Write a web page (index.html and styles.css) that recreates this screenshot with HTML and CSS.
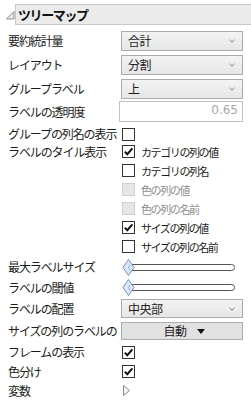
FILE: index.html
```html
<!DOCTYPE html>
<html lang="ja">
<head>
<meta charset="utf-8">
<link rel="stylesheet" href="styles.css">
</head>
<body>
<div class="panel">
  <div class="hdr">
    <svg class="hdr-tri" width="10" height="10" viewBox="0 0 10 10"><polygon points="9,1.5 9,9 1.5,9" fill="#e8e8e8" stroke="#8c8c8c" stroke-width="1"/></svg>
    <div class="title-box">ツリーマップ</div>
  </div>
  <div class="form">
    <div class="row h24">
      <span class="lbl">要約統計量</span>
      <div class="combo"><span class="combo-text">合計</span><svg class="chev" width="6" height="4" viewBox="0 0 6 4"><polyline points="0.5,0.8 3,3.2 5.5,0.8" fill="none" stroke="#777" stroke-width="1"/></svg></div>
    </div>
    <div class="row h24">
      <span class="lbl">レイアウト</span>
      <div class="combo"><span class="combo-text">分割</span><svg class="chev" width="6" height="4" viewBox="0 0 6 4"><polyline points="0.5,0.8 3,3.2 5.5,0.8" fill="none" stroke="#777" stroke-width="1"/></svg></div>
    </div>
    <div class="row h24">
      <span class="lbl">グループラベル</span>
      <div class="combo"><span class="combo-text">上</span><svg class="chev" width="6" height="4" viewBox="0 0 6 4"><polyline points="0.5,0.8 3,3.2 5.5,0.8" fill="none" stroke="#777" stroke-width="1"/></svg></div>
    </div>
    <div class="row h21">
      <span class="lbl">ラベルの透明度</span>
      <div class="field">0.65</div>
    </div>
    <div class="row h20 pt4">
      <span class="lbl">グループの列名の表示</span>
      <span class="cb"></span>
    </div>
    <div class="row top">
      <span class="lbl lh19">ラベルのタイル表示</span>
      <div class="cb-list">
        <div class="cb-item"><span class="cb"><svg width="11" height="11" viewBox="0 0 11 11"><path d="M1.8 5.6 L4.3 8.2 L9.4 2.4" fill="none" stroke="#111" stroke-width="2"/></svg></span><span class="cb-lbl">カテゴリの列の値</span></div>
        <div class="cb-item"><span class="cb"></span><span class="cb-lbl">カテゴリの列名</span></div>
        <div class="cb-item"><span class="cb dis"></span><span class="cb-lbl dis-t">色の列の値</span></div>
        <div class="cb-item"><span class="cb dis"></span><span class="cb-lbl dis-t">色の列の名前</span></div>
        <div class="cb-item"><span class="cb"><svg width="11" height="11" viewBox="0 0 11 11"><path d="M1.8 5.6 L4.3 8.2 L9.4 2.4" fill="none" stroke="#111" stroke-width="2"/></svg></span><span class="cb-lbl">サイズの列の値</span></div>
        <div class="cb-item"><span class="cb"></span><span class="cb-lbl">サイズの列の名前</span></div>
      </div>
    </div>
    <div class="row h22">
      <span class="lbl">最大ラベルサイズ</span>
      <div class="slider"><span class="track"></span><svg class="thumb" width="13" height="17" viewBox="0 0 13 17"><polygon points="6.5,0.5 12,8.5 6.5,16.5 1,8.5" fill="#dde9f7" stroke="#6f90c2" stroke-width="1"/><path d="M8 5.8 Q5 8.5 8 11.2" fill="none" stroke="#8eaad3" stroke-width="1"/></svg></div>
    </div>
    <div class="row h19">
      <span class="lbl">ラベルの閾値</span>
      <div class="slider"><span class="track"></span><svg class="thumb" width="13" height="17" viewBox="0 0 13 17"><polygon points="6.5,0.5 12,8.5 6.5,16.5 1,8.5" fill="#dde9f7" stroke="#6f90c2" stroke-width="1"/><path d="M8 5.8 Q5 8.5 8 11.2" fill="none" stroke="#8eaad3" stroke-width="1"/></svg></div>
    </div>
    <div class="row h23">
      <span class="lbl">ラベルの配置</span>
      <div class="combo short"><span class="combo-text">中央部</span><svg class="chev" width="6" height="4" viewBox="0 0 6 4"><polyline points="0.5,0.8 3,3.2 5.5,0.8" fill="none" stroke="#777" stroke-width="1"/></svg></div>
    </div>
    <div class="row h22">
      <span class="lbl">サイズの列のラベルの</span>
      <div class="btn"><span>自動</span><svg class="btn-arrow" width="8" height="5" viewBox="0 0 8 5"><polygon points="0,0 8,0 4,5" fill="#111"/></svg></div>
    </div>
    <div class="row h20">
      <span class="lbl">フレームの表示</span>
      <span class="cb"><svg width="11" height="11" viewBox="0 0 11 11"><path d="M1.8 5.6 L4.3 8.2 L9.4 2.4" fill="none" stroke="#111" stroke-width="2"/></svg></span>
    </div>
    <div class="row h19">
      <span class="lbl">色分け</span>
      <span class="cb"><svg width="11" height="11" viewBox="0 0 11 11"><path d="M1.8 5.6 L4.3 8.2 L9.4 2.4" fill="none" stroke="#111" stroke-width="2"/></svg></span>
    </div>
    <div class="row h19">
      <span class="lbl">変数</span>
      <svg class="disc" width="9" height="13" viewBox="0 0 9 13"><polygon points="1.5,1.5 7.5,6.5 1.5,11.5" fill="#f5f5f5" stroke="#8a8a8a" stroke-width="1"/></svg>
    </div>
  </div>
</div>
</body>
</html>
```
FILE: styles.css
```css
html, body {
  margin: 0;
  background: #ffffff;
}
body {
  font-family: "Noto Sans CJK JP", "Noto Sans", sans-serif;
  font-size: 12px;
  color: #1c1c1c;
  overflow: hidden;
}
.panel {
  width: 251px;
  padding-top: 4px;
}
.hdr {
  display: flex;
  align-items: center;
  height: 21px;
}
.hdr-tri {
  margin-left: 5px;
  flex: none;
}
.title-box {
  flex: 1;
  height: 21px;
  margin-right: -3px;
  box-sizing: border-box;
  border: 1px solid #c8c8c8;
  background: #ebebeb;
  display: flex;
  align-items: center;
  padding-left: 2px;
  font-weight: bold;
  font-size: 13px;
  letter-spacing: -1.4px;
  color: #111;
}
.form {
  margin-top: 4px;
}
.row {
  display: flex;
  align-items: center;
  box-sizing: border-box;
}
.row.top {
  align-items: flex-start;
}
.h19 { height: 19px; }
.h20 { height: 20px; }
.h21 { height: 21px; }
.h22 { height: 22px; }
.h23 { height: 23px; }
.h24 { height: 24px; }
.pt4 { padding-top: 4px; }
.lbl {
  flex: none;
  width: 112px;
  margin-left: 8px;
  margin-right: 1px;
  white-space: nowrap;
  letter-spacing: -1.1px;
  line-height: 16px;
}
.lh19 {
  line-height: 19px;
}
.combo {
  width: 122px;
  height: 20px;
  box-sizing: border-box;
  border: 1px solid #acacac;
  background: linear-gradient(#f3f3f3, #e6e6e6);
  display: flex;
  align-items: center;
  padding-left: 6px;
  padding-right: 7px;
}
.combo.short {
  height: 19px;
}
.combo-text {
  letter-spacing: -0.5px;
  line-height: 16px;
}
.chev {
  margin-left: auto;
}
.field {
  margin-left: -2px;
  width: 124px;
  height: 21px;
  box-sizing: border-box;
  border: 1px solid #c2c2c2;
  background: #fff;
  text-align: right;
  padding-right: 4px;
  font-family: "DejaVu Sans", sans-serif;
  font-size: 12px;
  line-height: 17px;
  color: #a8a8a8;
}
.cb {
  flex: none;
  width: 13px;
  height: 13px;
  margin-left: 1px;
  box-sizing: border-box;
  border: 1px solid #333;
  background: #fff;
  display: flex;
  align-items: center;
  justify-content: center;
}
.cb.dis {
  border-color: #d0d0d0;
  background: #e6e6e6;
}
.cb-list {
  display: flex;
  flex-direction: column;
}
.cb-item {
  height: 19px;
  display: flex;
  align-items: center;
}
.cb-lbl {
  margin-left: 6px;
  font-size: 11px;
  letter-spacing: -1.4px;
  line-height: 16px;
  white-space: nowrap;
}
.dis-t {
  color: #8e8e8e;
}
.slider {
  position: relative;
  width: 114px;
  height: 17px;
  margin-left: 1px;
}
.track {
  position: absolute;
  left: 6px;
  top: 5px;
  width: 107px;
  height: 7px;
  box-sizing: border-box;
  border: 1px solid #545454;
  border-radius: 4px;
  background: #fff;
}
.thumb {
  position: absolute;
  left: 0;
  top: 0;
}
.btn {
  width: 122px;
  height: 18px;
  box-sizing: border-box;
  border: 1px solid #adadad;
  background: #e1e1e1;
  display: flex;
  align-items: center;
  justify-content: center;
  letter-spacing: -0.5px;
  line-height: 16px;
  padding-left: 4px;
}
.btn-arrow {
  margin-left: 10px;
}
.disc {
  margin-left: 1px;
}
```
